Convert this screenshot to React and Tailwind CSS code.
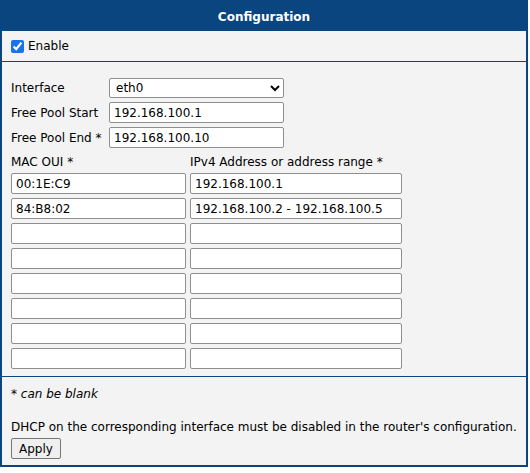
import React from "react";

const rows = [
  ["00:1E:C9", "192.168.100.1"],
  ["84:B8:02", "192.168.100.2 - 192.168.100.5"],
  ["", ""],
  ["", ""],
  ["", ""],
  ["", ""],
  ["", ""],
  ["", ""],
];

const inputCls =
  "h-[21px] border border-[#8f8f8f] rounded-[2px] bg-white px-[4px] text-[12px] text-black outline-none";

export default function App() {
  return (
    <div className="w-[530px] h-[473px] bg-white font-['DejaVu_Sans',sans-serif] text-[12px] text-black">
      <div className="w-[528px] border-2 border-[#0a4580] bg-[#f3f3f3]">
        {/* header */}
        <div className="h-[29px] bg-[#0a4580] text-white font-bold text-[12px] flex items-center justify-center">
          Configuration
        </div>

        {/* enable */}
        <div className="h-[31px] flex items-center px-[9px] border-b border-[#0a4580]">
          <input type="checkbox" defaultChecked className="w-[13px] h-[13px] m-0 accent-[#1a73e8]" />
          <span className="ml-[4px]">Enable</span>
        </div>

        {/* main */}
        <div className="px-[9px] pt-[16px] pb-[7px] border-b border-[#0a4580]">
          <div className="flex flex-col gap-[4px]">
            <div className="flex items-center h-[20px]">
              <span className="w-[98px]">Interface</span>
              <select className="w-[175px] h-[20px] border border-[#8f8f8f] rounded-[2px] bg-white px-[2px] text-[12px]">
                <option>eth0</option>
              </select>
            </div>
            <div className="flex items-center">
              <span className="w-[98px]">Free Pool Start</span>
              <input className={inputCls + " w-[175px]"} defaultValue="192.168.100.1" />
            </div>
            <div className="flex items-center">
              <span className="w-[98px]">Free Pool End *</span>
              <input className={inputCls + " w-[175px]"} defaultValue="192.168.100.10" />
            </div>
          </div>

          <div className="flex mt-[4px] h-[20px] items-center">
            <span className="w-[179px]">MAC OUI *</span>
            <span>IPv4 Address or address range *</span>
          </div>

          <div className="flex flex-col gap-[4px] mt-[1px]">
            {rows.map((r, i) => (
              <div key={i} className="flex gap-[4px]">
                <input className={inputCls + " w-[175px]"} defaultValue={r[0]} />
                <input className={inputCls + " w-[212px]"} defaultValue={r[1]} />
              </div>
            ))}
          </div>
        </div>

        {/* footer */}
        <div className="px-[9px] pt-[8px] pb-[6px]">
          <div className="italic">* can be blank</div>
          <div className="mt-[15px]">
            DHCP on the corresponding interface must be disabled in the router's configuration.
          </div>
          <button className="mt-[2px] h-[21px] px-[7px] border border-[#767676] rounded-[2px] bg-[#efefef] text-[12px]">
            Apply
          </button>
        </div>
      </div>
    </div>
  );
}
